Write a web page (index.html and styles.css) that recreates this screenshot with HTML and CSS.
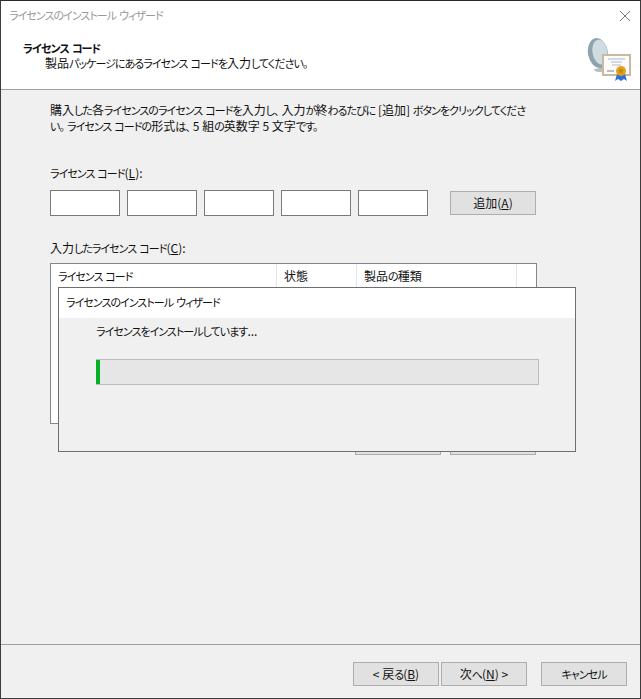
FILE: index.html
```html
<!DOCTYPE html>
<html lang="ja">
<head>
    <meta charset="UTF-8">
    <title>ライセンスのインストール ウィザード</title>
    <link rel="stylesheet" href="styles.css">
</head>
<body>
    <div class="window">
        <div class="titlebar">
            <span class="title k">ライセンスのインストール ウィザード</span>
            <svg class="close" width="10" height="10" viewBox="0 0 10 10">
                <path d="M0 0L10 10M10 0L0 10" stroke="#777" stroke-width="1" fill="none"/>
            </svg>
        </div>
        <div class="header">
            <div class="header-text">
                <div class="header-title k">ライセンス コード</div>
                <div class="header-sub">製品<span class="k">パッケージにあるライセンス コードを</span>入力<span class="k">してください。</span></div>
            </div>
            <svg class="header-icon" width="46" height="44" viewBox="0 0 46 44">
                <!-- dish -->
                <rect x="13" y="26" width="7" height="7" fill="#a9b3b6"/>
                <ellipse cx="15" cy="32" rx="7" ry="2" fill="#b8c0c2"/>
                <ellipse cx="12" cy="15" rx="10" ry="15" transform="rotate(-10 12 15)" fill="#8fa3ac"/>
                <ellipse cx="14" cy="14" rx="7.5" ry="12.5" transform="rotate(-10 14 14)" fill="#cfdce1"/>
                <!-- certificate -->
                <rect x="17" y="17" width="27" height="20" fill="#fbfbf8" stroke="#c9b8a2" stroke-width="2"/>
                <path d="M22 21H39M25 24H36M26 27H35" stroke="#a9b9dc" stroke-width="1"/>
                <path d="M21 33H28" stroke="#b5bcc9" stroke-width="2"/>
                <!-- seal -->
                <path d="M31 36L29 43L32 41L35 43L38 41L41 43L39 36Z" fill="#2f6fd8"/>
                <circle cx="35" cy="33" r="5" fill="#e3a21a"/>
                <circle cx="35" cy="33" r="2.2" fill="#c9851a"/>
            </svg>
        </div>
        <div class="content">
            <p class="intro">購入<span class="k">した</span>各<span class="k">ライセンスのライセンス コードを</span>入力<span class="k punct">し、</span>入力<span class="k">が</span>終<span class="k">わるたびに</span> [追加] <span class="k">ボタンをクリックしてくださ</span><br><span class="k punct">い。</span><span class="k">ライセンス コードの</span>形式<span class="k punct">は、</span>5 組<span class="k">の</span>英数字 5 文字<span class="k">です。</span></p>
            <div class="label label-code"><span class="k">ライセンス コード</span>(<u>L</u>):</div>
            <div class="code-row">
                <input class="code" type="text">
                <input class="code" type="text">
                <input class="code" type="text">
                <input class="code" type="text">
                <input class="code" type="text">
                <button class="btn btn-add">追加(<u>A</u>)</button>
            </div>
            <div class="label label-list">入力<span class="k">したライセンス コード</span>(<u>C</u>):</div>
            <div class="list">
                <div class="list-head">
                    <span class="col col-code"><span class="k">ライセンス コード</span></span>
                    <span class="col col-state">状態</span>
                    <span class="col col-type">製品<span class="k">の</span>種類</span>
                </div>
            </div>
            <div class="list-actions">
                <button class="btn"></button>
                <button class="btn"></button>
            </div>
        </div>
        <div class="footer">
            <button class="btn">&lt; 戻<span class="k">る</span>(<u>B</u>)</button>
            <button class="btn btn-next">次<span class="k">へ</span>(<u>N</u>) &gt;</button>
            <button class="btn"><span class="k">キャンセル</span></button>
        </div>

        <div class="progress-dialog">
            <div class="dialog-title k">ライセンスのインストール ウィザード</div>
            <div class="dialog-body">
                <div class="dialog-msg"><span class="k">ライセンスをインストールしています</span>...</div>
                <div class="progress"><div class="progress-fill"></div></div>
            </div>
        </div>
    </div>
</body>
</html>
```

FILE: styles.css
```css
* {
    box-sizing: border-box;
}
body {
    margin: 0;
    background: #f0f0f0;
    font-family: "Noto Sans CJK JP", "Noto Sans", sans-serif;
    font-size: 12px;
    font-feature-settings: "palt";
    color: #111;
}
/* kana run narrower than kanji in the original UI font */
.k {
    font-size: 11px;
    letter-spacing: -0.95px;
    word-spacing: 1.5px;
}
.punct {
    padding-right: 3px;
}
u {
    text-underline-offset: 1px;
}
.window {
    position: relative;
    width: 641px;
    height: 699px;
    border: 1px solid #3c3c3c;
    border-top-color: #2b2b2b;
    display: flex;
    flex-direction: column;
    overflow: hidden;
}
.titlebar {
    height: 29px;
    background: #fff;
    display: flex;
    align-items: center;
    justify-content: space-between;
    padding: 0 10px 0 8px;
    flex: none;
}
.title {
    color: #999;
    line-height: 29px;
}
.header {
    height: 60px;
    background: #fff;
    border-bottom: 1px solid #a0a0a0;
    display: flex;
    justify-content: space-between;
    padding: 0 8px 0 22px;
    flex: none;
}
.header-title {
    font-weight: 700;
    line-height: 14px;
    margin-top: 11px;
}
.header-sub {
    line-height: 16px;
    margin-left: 22px;
}
.header-icon {
    margin-top: 8px;
}
.content {
    flex: 1;
    padding: 12px 0 0 49px;
}
.intro {
    margin: 0;
    width: 490px;
    line-height: 16px;
    white-space: nowrap;
}
.label {
    line-height: 16px;
}
.label-code {
    margin-top: 31px;
}
.code-row {
    display: flex;
    align-items: center;
    gap: 7px;
    margin-top: 9px;
}
.code {
    width: 70px;
    height: 26px;
    border: 1px solid #7a7a7a;
    background: #fff;
    padding: 0;
}
.btn {
    width: 86px;
    height: 24px;
    border: 1px solid #adadad;
    background: #e1e1e1;
    font: inherit;
    font-feature-settings: inherit;
    color: #111;
    padding: 0 0 2px;
}
.btn-add {
    margin-left: 15px;
}
.label-list {
    margin-top: 24px;
}
.list {
    width: 487px;
    height: 161px;
    margin-top: 7px;
    border: 1px solid #82878f;
    background: #fff;
}
.list-head {
    display: flex;
    height: 24px;
}
.col {
    border-right: 1px solid #e5e5e5;
    padding-left: 7px;
    line-height: 24px;
}
.col-code {
    width: 226px;
}
.col-state {
    width: 80px;
}
.col-type {
    width: 160px;
}
.list-actions {
    display: flex;
    gap: 9px;
    margin: 7px 0 0 305px;
}
.footer {
    height: 54px;
    border-top: 1px solid #a0a0a0;
    display: flex;
    gap: 2px;
    padding: 17px 0 0 352px;
    flex: none;
}
.btn-next {
    margin-right: 12px;
}
.progress-dialog {
    position: absolute;
    left: 57px;
    top: 286px;
    width: 518px;
    height: 165px;
    border: 1px solid #6e6e6e;
    background: #f0f0f0;
}
.dialog-title {
    height: 30px;
    background: #fff;
    padding-left: 7px;
    line-height: 28px;
}
.dialog-body {
    padding: 5px 0 0 37px;
}
.dialog-msg {
    line-height: 16px;
}
.progress {
    width: 443px;
    height: 26px;
    margin-top: 20px;
    background: #e6e6e6;
    border: 1px solid #bcbcbc;
    border-left: 0;
}
.progress-fill {
    width: 4px;
    height: 24px;
    background: #06b025;
}
```
